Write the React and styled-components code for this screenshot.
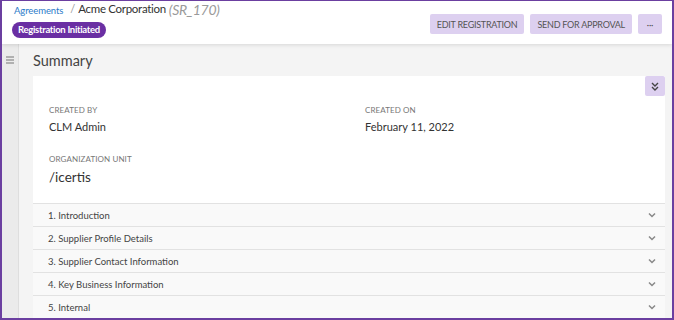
import React from 'react';
import styled, { createGlobalStyle } from 'styled-components';

const Global = createGlobalStyle`
  html, body { margin: 0; padding: 0; }
  body { font-family: Lato, "Open Sans", sans-serif; }
  * { box-sizing: border-box; }
`;

const Frame = styled.div`
  width: 674px;
  height: 320px;
  border: 2px solid #6b3fa0;
  border-top-width: 1px;
  display: flex;
  flex-direction: column;
  overflow: hidden;
  background: #fff;
`;

const Header = styled.header`
  height: 43px;
  flex: none;
  display: flex;
  justify-content: space-between;
  align-items: flex-start;
  padding: 0 10px 0 10px;
  background: #fff;
  box-shadow: 0 1px 4px rgba(0, 0, 0, 0.12);
  position: relative;
  z-index: 1;
`;

const TitleBlock = styled.div`
  display: flex;
  flex-direction: column;
  gap: 6px;
`;

const Crumbs = styled.div`
  display: flex;
  align-items: baseline;
  height: 17px;
  margin-top: -2px;
  white-space: nowrap;
`;

const CrumbLink = styled.a`
  color: #2b7bc9;
  font-size: 9.5px;
  letter-spacing: -0.1px;
  margin-left: 2px;
  position: relative;
  top: 1px;
  text-decoration: none;
`;

const Slash = styled.span`
  color: #999;
  font-size: 11px;
  margin: 0 3px 0 7px;
`;

const Name = styled.span`
  color: #333;
  font-size: 11.5px;
  letter-spacing: -0.3px;
`;

const Code = styled.span`
  color: #9a9a9a;
  font-size: 14px;
  font-style: italic;
  letter-spacing: -0.3px;
  margin-left: 3px;
  position: relative;
  top: 2px;
`;

const Badge = styled.span`
  align-self: flex-start;
  background: #6a2fa3;
  color: #fff;
  font-size: 9.5px;
  font-weight: 700;
  letter-spacing: -0.3px;
  padding: 2px 6px 2px;
  border-radius: 9px;
  line-height: 12px;
`;

const Actions = styled.div`
  display: flex;
  gap: 6px;
  margin-top: 13px;
`;

const ActionButton = styled.button`
  height: 20px;
  padding: 0 7px;
  min-width: ${p => (p.$icon ? '24px' : 'auto')};
  border: none;
  border-radius: 2px;
  background: #ddd0f0;
  color: #555;
  font-family: Lato, sans-serif;
  font-size: 9px;
  letter-spacing: -0.25px;
  cursor: pointer;
`;

const Body = styled.div`
  flex: 1;
  display: flex;
  min-height: 0;
`;

const SideRail = styled.aside`
  width: 17px;
  flex: none;
  background: #ebebeb;
  border-right: 1px solid #dedede;
  display: flex;
  justify-content: center;
  padding-top: 12px;
`;

const Main = styled.main`
  flex: 1;
  background: #f4f4f4;
  padding: 0 7px 0 14px;
  display: flex;
  flex-direction: column;
  min-width: 0;
`;

const PageTitle = styled.h1`
  margin: 0;
  height: 32px;
  display: flex;
  align-items: center;
  font-size: 14.5px;
  font-weight: 400;
  color: #444;
  padding-top: 1px;
`;

const Card = styled.section`
  background: #fff;
  position: relative;
  flex: 1;
`;

const ExpandButton = styled.button`
  position: absolute;
  top: 0;
  right: 0;
  width: 20px;
  height: 20px;
  border: none;
  border-radius: 2px;
  background: #ddd0f0;
  display: flex;
  align-items: center;
  justify-content: center;
  padding: 0;
`;

const Fields = styled.div`
  display: grid;
  grid-template-columns: 316px 1fr;
  align-content: start;
  row-gap: 20px;
  padding: 29px 16px 0;
  height: 127px;
`;

const Field = styled.div`
  display: flex;
  flex-direction: column;
  gap: ${p => (p.$big ? '6px' : '5px')};
`;

const Label = styled.span`
  font-size: 8px;
  color: #777;
  letter-spacing: 0.1px;
  line-height: 10px;
`;

const Value = styled.span`
  font-size: ${p => (p.$big ? '13.5px' : '11px')};
  color: #333;
  line-height: 14px;
`;

const Section = styled.div`
  height: 23px;
  display: flex;
  align-items: center;
  justify-content: space-between;
  padding: 0 9px 0 15px;
  background: #f9f9f9;
  border-top: 1px solid #e2e2e2;
  font-size: 9.5px;
  color: #444;
`;

const Hamburger = () => (
  <svg width="8" height="8" viewBox="0 0 8 8">
    <path d="M0 1h8M0 4h8M0 7h8" stroke="#777" strokeWidth="1.2" />
  </svg>
);

const Chevron = () => (
  <svg width="8" height="6" viewBox="0 0 8 6">
    <path d="M1 1.5l3 3 3-3" fill="none" stroke="#888" strokeWidth="1.5" />
  </svg>
);

const DoubleChevron = () => (
  <svg width="8" height="9" viewBox="0 0 8 9">
    <path d="M1 1l3 3 3-3M1 5l3 3 3-3" fill="none" stroke="#444" strokeWidth="1.4" />
  </svg>
);

const sections = [
  '1. Introduction',
  '2. Supplier Profile Details',
  '3. Supplier Contact Information',
  '4. Key Business Information',
  '5. Internal',
];

export default function App() {
  return (
    <>
      <Global />
      <Frame>
        <Header>
          <TitleBlock>
            <Crumbs>
              <CrumbLink href="#">Agreements</CrumbLink>
              <Slash>/</Slash>
              <Name>Acme Corporation</Name>
              <Code>(SR_170)</Code>
            </Crumbs>
            <Badge>Registration Initiated</Badge>
          </TitleBlock>
          <Actions>
            <ActionButton>EDIT REGISTRATION</ActionButton>
            <ActionButton>SEND FOR APPROVAL</ActionButton>
            <ActionButton $icon>···</ActionButton>
          </Actions>
        </Header>
        <Body>
          <SideRail>
            <Hamburger />
          </SideRail>
          <Main>
            <PageTitle>Summary</PageTitle>
            <Card>
              <ExpandButton aria-label="expand">
                <DoubleChevron />
              </ExpandButton>
              <Fields>
                <Field>
                  <Label>CREATED BY</Label>
                  <Value>CLM Admin</Value>
                </Field>
                <Field>
                  <Label>CREATED ON</Label>
                  <Value>February 11, 2022</Value>
                </Field>
                <Field $big>
                  <Label>ORGANIZATION UNIT</Label>
                  <Value $big>/icertis</Value>
                </Field>
              </Fields>
              {sections.map(s => (
                <Section key={s}>
                  <span>{s}</span>
                  <Chevron />
                </Section>
              ))}
            </Card>
          </Main>
        </Body>
      </Frame>
    </>
  );
}
